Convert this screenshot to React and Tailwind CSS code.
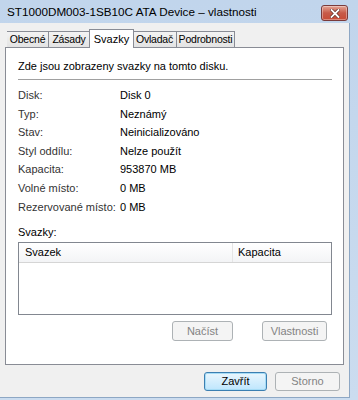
import React from "react";

const font = { fontFamily: '"Liberation Sans", Arial, sans-serif' };

const rows = [
  ["Disk:", "Disk 0"],
  ["Typ:", "Neznámý"],
  ["Stav:", "Neinicializováno"],
  ["Styl oddílu:", "Nelze použít"],
  ["Kapacita:", "953870 MB"],
  ["Volné místo:", "0 MB"],
  ["Rezervované místo:", "0 MB"],
];

const tabs = [
  { label: "Obecné", w: "w-[42px] border-l" },
  { label: "Zásady", w: "w-[41px]" },
  { label: "Svazky", w: "w-[45px]", active: true },
  { label: "Ovladač", w: "w-[44px]" },
  { label: "Podrobnosti", w: "w-[58px]" },
];

function Tab({ label, active, w }) {
  if (active)
    return (
      <div
        className={`relative z-10 -ml-px -mr-px -mb-px flex h-[19px] justify-center border border-b-0 border-[#898c95] bg-white pt-[2px] text-[11px] leading-[14px] text-black ${w}`}
      >
        {label}
      </div>
    );
  return (
    <div
      className={`flex h-[16px] justify-center border border-b-0 border-l-0 border-[#898c95] bg-gradient-to-b from-[#f3f3f3] to-[#e3e3e3] pt-[1px] text-[10.5px] leading-[13px] tracking-[-0.2px] text-black ${w}`}
    >
      {label}
    </div>
  );
}

function Button({ children, disabled, primary, className = "" }) {
  let look = "border-[#adb2b5] bg-[#f4f4f4] text-[#838383]";
  if (primary)
    look =
      "border-[#3c7fb1] bg-gradient-to-b from-[#eaf6fd] to-[#bee6fd] text-black shadow-[inset_0_0_0_1px_#a6dcf6]";
  else if (!disabled)
    look = "border-[#707070] bg-gradient-to-b from-[#f2f2f2] to-[#dddddd] text-black";
  return (
    <div
      className={`flex items-center justify-center rounded-[3px] border text-[11px] ${look} ${className}`}
    >
      {children}
    </div>
  );
}

export default function App() {
  return (
    <div
      className="flex h-[400px] w-[358px] flex-col bg-gradient-to-b from-[#c1d5ec] to-[#cbdcef]"
      style={font}
    >
      {/* title bar */}
      <div className="flex h-[23px] shrink-0 items-start justify-between pl-[7px] pr-[10px]">
        <div className="whitespace-nowrap pt-[4px] text-[11.7px] leading-[16px] text-black">
          ST1000DM003-1SB10C ATA Device – vlastnosti
        </div>
        <div className="mt-[5px] flex h-[16px] w-[27px] items-center justify-center rounded-[3px] border border-[#7a3b3b] bg-gradient-to-b from-[#e4a595] via-[#c75a48] to-[#c84b36] shadow-[inset_0_0_0_1px_rgba(255,255,255,0.35)]">
          <svg width="10" height="9" viewBox="0 0 10 9">
            <path
              d="M1.5 1 L8.5 8 M8.5 1 L1.5 8"
              stroke="#5a2a22"
              strokeWidth="3.2"
              strokeLinecap="square"
            />
            <path
              d="M1.5 1 L8.5 8 M8.5 1 L1.5 8"
              stroke="#ffffff"
              strokeWidth="1.8"
              strokeLinecap="square"
            />
          </svg>
        </div>
      </div>

      {/* client area */}
      <div className="mr-[8px] mb-[2px] flex flex-1 flex-col border-r border-b border-[#8da7c4] bg-[#f0f0f0] pt-[6px] pl-[5px] pr-[5px]">
        <div className="flex items-end pl-[2px]">
          {tabs.map((t) => (
            <Tab key={t.label} {...t} />
          ))}
        </div>

        <div className="flex h-[318px] w-[339px] flex-col border border-[#898c95] bg-white px-[12px] pt-[10px] text-[11px] text-black">
          <div className="leading-[16px]">
            Zde jsou zobrazeny svazky na tomto disku.
          </div>
          <div className="mt-[5px] mb-[6px] h-px w-[314px] bg-[#a0a0a0]" />

          <div className="flex flex-col">
            {rows.map(([k, v]) => (
              <div key={k} className="flex h-[18.6px] items-center whitespace-nowrap">
                <div className="w-[102px] text-[#333]">{k}</div>
                <div>{v}</div>
              </div>
            ))}
          </div>

          <div className="mt-[8px] leading-[16px]">Svazky:</div>
          <div className="mt-[2px] h-[73px] w-[314px] border border-[#828790] bg-white">
            <div className="flex h-[20px] border-b border-[#d5d5d5] bg-gradient-to-b from-[#ffffff] to-[#f3f4f6]">
              <div className="flex w-[214px] items-center border-r border-[#e5e5e5] pl-[6px]">
                Svazek
              </div>
              <div className="flex items-center pl-[5px]">Kapacita</div>
            </div>
          </div>

          <div className="mt-[6px] flex justify-end gap-[29px] pr-[4px]">
            <Button disabled className="h-[20px] w-[61px]">
              Načíst
            </Button>
            <Button disabled className="h-[20px] w-[65px]">
              Vlastnosti
            </Button>
          </div>
        </div>

        <div className="mt-[7px] flex justify-end gap-[8px] pr-[4px]">
          <Button primary className="h-[19px] w-[63px]">
            Zavřít
          </Button>
          <Button disabled className="h-[19px] w-[65px]">
            Storno
          </Button>
        </div>
      </div>
    </div>
  );
}
